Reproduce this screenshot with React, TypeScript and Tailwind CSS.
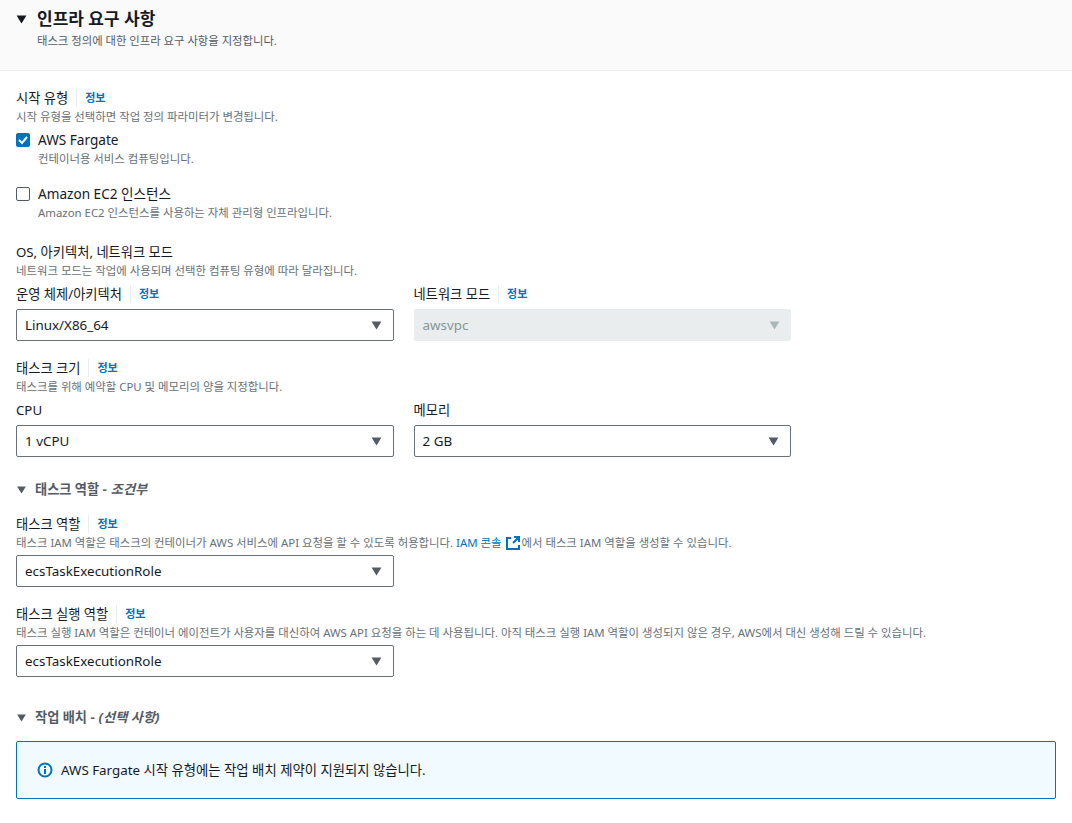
const FONT = "font-['Noto_Sans','Noto_Sans_CJK_KR',sans-serif]";

function Caret({ className = "" }: { className?: string }) {
  return (
    <svg viewBox="0 0 12 10" className={className} fill="currentColor">
      <path d="M0.5 0.5h11L6 9.5z" />
    </svg>
  );
}

function Info() {
  return (
    <span className="ml-2 flex h-[18px] items-center border-l border-[#eaeded] pl-2 text-[11px] font-bold text-[#0073bb]">
      정보
    </span>
  );
}

function Label({ text, info = true }: { text: string; info?: boolean }) {
  return (
    <div className="flex h-5 items-center text-[13.25px] leading-5 text-[#16191f]">
      <span>{text}</span>
      {info && <Info />}
    </div>
  );
}

function Desc({ children }: { children: React.ReactNode }) {
  return <p className="h-[18px] text-[11.4px] leading-[18px] whitespace-nowrap text-[#687078]">{children}</p>;
}

function Select({ value, disabled = false }: { value: string; disabled?: boolean }) {
  return (
    <div
      className={
        disabled
          ? "flex h-8 w-full items-center justify-between rounded-[2px] bg-[#eaeded] pr-[11px] pl-[9px] text-[13.4px] text-[#879596]"
          : "flex h-8 w-full items-center justify-between rounded-[2px] border border-[#687078] bg-white pr-[11px] pl-2 text-[13.4px] text-[#16191f]"
      }
    >
      <span>{value}</span>
      <Caret className={disabled ? "h-[9px] w-[11px] text-[#aab7b8]" : "h-[9px] w-[11px] text-[#545b64]"} />
    </div>
  );
}

function SectionHead({ children }: { children: React.ReactNode }) {
  return (
    <div className="flex h-5 items-center text-[13.2px] font-bold text-[#545b64]">
      <Caret className="mr-2 h-[8px] w-[11px] text-[#545b64]" />
      {children}
    </div>
  );
}

export default function App() {
  return (
    <div className={`${FONT} min-h-[823px] bg-white`}>
      <div className="h-[71px] border-b border-[#eaeded] bg-[#fafafa] pt-[7px] pl-4">
        <div className="flex h-6 items-center">
          <Caret className="mr-[10px] h-[9px] w-[11px] text-[#16191f]" />
          <h2 className="text-[17px] leading-6 font-bold text-[#16191f]">인프라 요구 사항</h2>
        </div>
        <p className="mt-[1px] pl-[21px] text-[11.35px] leading-[18px] text-[#545b64]">
          태스크 정의에 대한 인프라 요구 사항을 지정합니다.
        </p>
      </div>

      <div className="px-4 pt-[17px]">
        <Label text="시작 유형" />
        <Desc>시작 유형을 선택하면 작업 정의 파라미터가 변경됩니다.</Desc>

        <div className="mt-[4px] flex gap-2">
          <span className="mt-[3px] flex h-[14px] w-[14px] items-center justify-center rounded-[2px] bg-[#0073bb]">
            <svg viewBox="0 0 14 14" className="h-[14px] w-[14px]" fill="none" stroke="white" strokeWidth="2">
              <path d="M3 7l3 3 5-6" />
            </svg>
          </span>
          <div>
            <div className="h-5 text-[13.6px] leading-5 text-[#16191f]">AWS Fargate</div>
            <Desc>컨테이너용 서비스 컴퓨팅입니다.</Desc>
          </div>
        </div>

        <div className="mt-[16px] flex gap-2">
          <span className="mt-[3px] h-[14px] w-[14px] rounded-[2px] border border-[#545b64] bg-white" />
          <div>
            <div className="h-5 text-[13.6px] leading-5 text-[#16191f]">Amazon EC2 인스턴스</div>
            <Desc>Amazon EC2 인스턴스를 사용하는 자체 관리형 인프라입니다.</Desc>
          </div>
        </div>

        <div className="mt-[20px]">
          <Label text="OS, 아키텍처, 네트워크 모드" info={false} />
          <Desc>네트워크 모드는 작업에 사용되며 선택한 컴퓨팅 유형에 따라 달라집니다.</Desc>
        </div>
        <div className="mt-[4px] grid w-[775px] grid-cols-2 gap-x-5">
          <div>
            <Label text="운영 체제/아키텍처" />
            <div className="mt-[5px]"><Select value="Linux/X86_64" /></div>
          </div>
          <div>
            <Label text="네트워크 모드" />
            <div className="mt-[5px]"><Select value="awsvpc" disabled /></div>
          </div>
        </div>

        <div className="mt-[17px]">
          <Label text="태스크 크기" />
          <Desc>태스크를 위해 예약할 CPU 및 메모리의 양을 지정합니다.</Desc>
        </div>
        <div className="mt-[4px] grid w-[775px] grid-cols-2 gap-x-5">
          <div>
            <Label text="CPU" info={false} />
            <div className="mt-[5px]"><Select value="1 vCPU" /></div>
          </div>
          <div>
            <Label text="메모리" info={false} />
            <div className="mt-[5px]"><Select value="2 GB" /></div>
          </div>
        </div>

        <div className="mt-[23px]">
          <SectionHead>
            태스크 역할 - <i className="ml-1">조건부</i>
          </SectionHead>
        </div>

        <div className="mt-[14px]">
          <Label text="태스크 역할" />
          <Desc>
            태스크 IAM 역할은 태스크의 컨테이너가 AWS 서비스에 API 요청을 할 수 있도록 허용합니다.{" "}
            <span className="text-[#0073bb]">IAM 콘솔</span>
            <svg viewBox="0 0 14 14" className="mx-[1px] ml-[5px] inline h-[14px] w-[14px] align-[-3px]" fill="none" stroke="#0073bb" strokeWidth="2">
              <path d="M5 2H1v11h12V9M7 7l6-6M8 1h5v5" />
            </svg>
            에서 태스크 IAM 역할을 생성할 수 있습니다.
          </Desc>
          <div className="mt-[3px] w-[378px]"><Select value="ecsTaskExecutionRole" /></div>
        </div>

        <div className="mt-[17px]">
          <Label text="태스크 실행 역할" />
          <Desc>
            태스크 실행 IAM 역할은 컨테이너 에이전트가 사용자를 대신하여 AWS API 요청을 하는 데 사용됩니다. 아직 태스크 실행 IAM 역할이 생성되지 않은 경우, AWS에서 대신 생성해 드릴 수 있습니다.
          </Desc>
          <div className="mt-[3px] w-[378px]"><Select value="ecsTaskExecutionRole" /></div>
        </div>

        <div className="mt-[31px]">
          <SectionHead>
            작업 배치 - <i className="ml-1">(선택 사항)</i>
          </SectionHead>
        </div>

        <div className="mt-[13px] flex h-[58px] w-[1040px] items-center gap-2 rounded-[2px] border border-[#0073bb] bg-[#f1faff] pl-5 text-[13.35px] text-[#16191f]">
          <svg viewBox="0 0 16 16" className="h-4 w-4 shrink-0" fill="none" stroke="#0073bb" strokeWidth="2">
            <circle cx="8" cy="8" r="6.5" />
            <path d="M8 7v5M8 4v2" />
          </svg>
          <span>AWS Fargate 시작 유형에는 작업 배치 제약이 지원되지 않습니다.</span>
        </div>
      </div>
    </div>
  );
}
